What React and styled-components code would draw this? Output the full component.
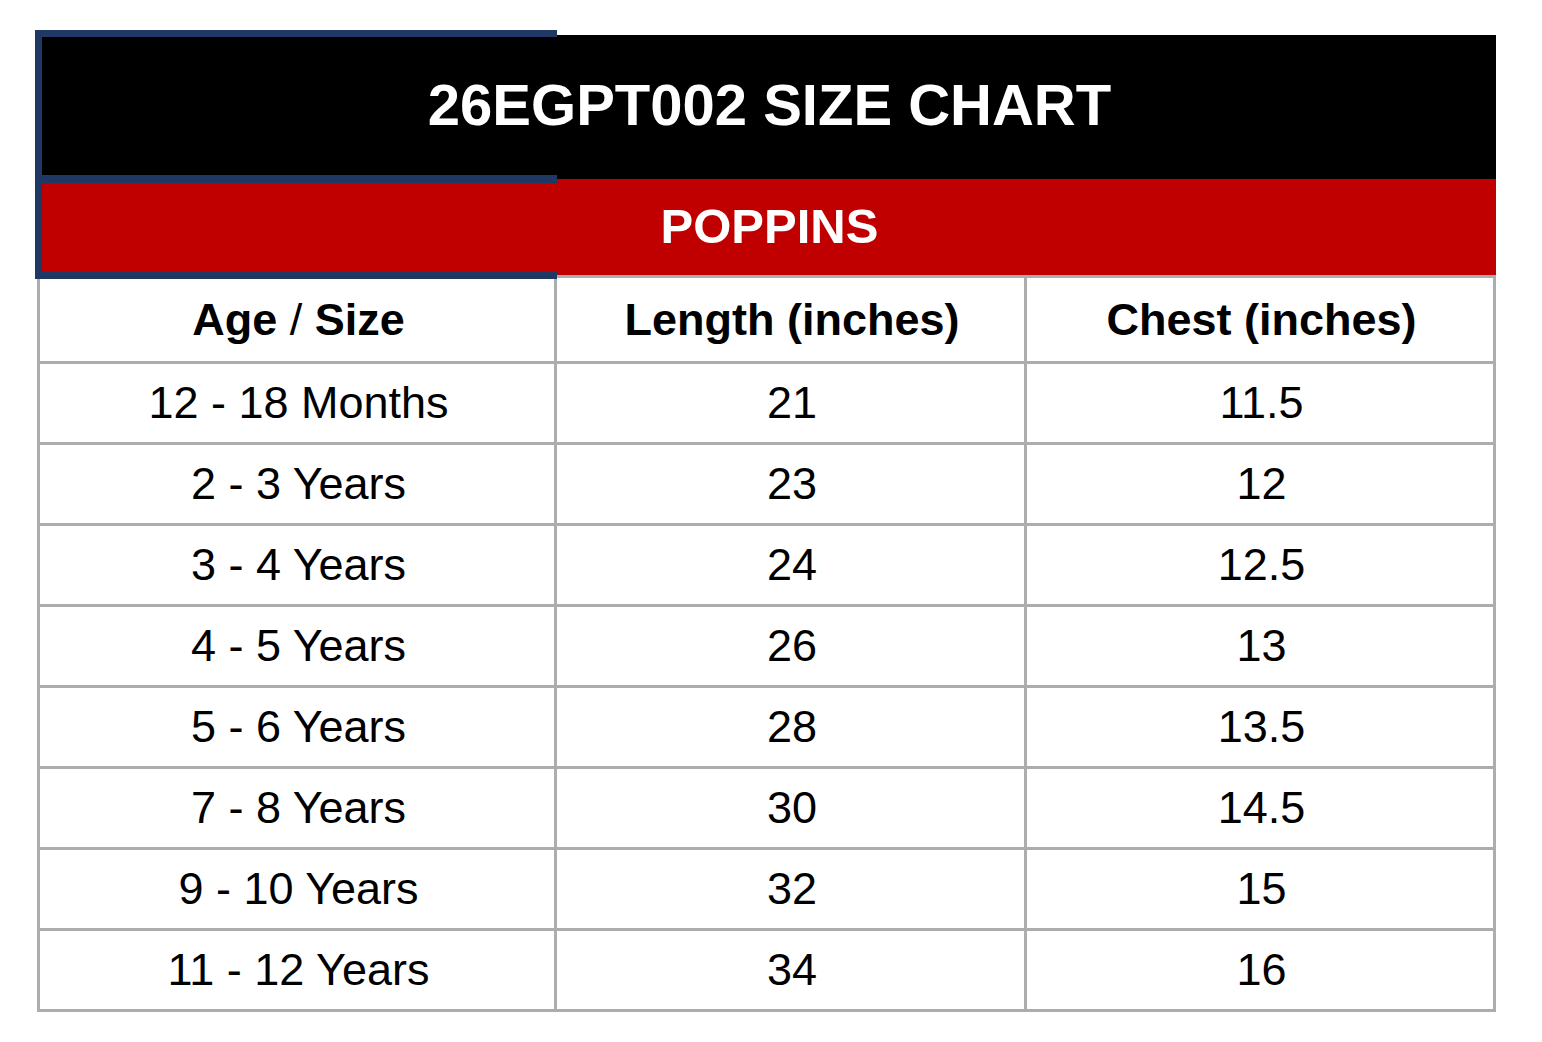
import React from 'react';
import styled, { createGlobalStyle } from 'styled-components';

const GlobalStyle = createGlobalStyle`
    body {
        margin: 0;
        background: #ffffff;
        font-family: "Liberation Sans", Arial, Helvetica, sans-serif;
    }
`

const rows = [
    ['12 - 18 Months', '21', '11.5'],
    ['2 - 3 Years', '23', '12'],
    ['3 - 4 Years', '24', '12.5'],
    ['4 - 5 Years', '26', '13'],
    ['5 - 6 Years', '28', '13.5'],
    ['7 - 8 Years', '30', '14.5'],
    ['9 - 10 Years', '32', '15'],
    ['11 - 12 Years', '34', '16'],
]

function App() {
    return (
        <>
        <GlobalStyle />
        <SPage>
            <SChart>
                <STitle>26EGPT002 SIZE CHART</STitle>
                <SBrand>POPPINS</SBrand>
                <SGrid>
                    <SCell head><span>Age <SSlash>/</SSlash> Size</span></SCell>
                    <SCell head>Length (inches)</SCell>
                    <SCell head>Chest (inches)</SCell>
                    {rows.map((row) => (
                        row.map((value, i) => (
                            <SCell key={row[0] + i}>{value}</SCell>
                        ))
                    ))}
                </SGrid>
                <SSelection>
                    <SSelectionBar />
                </SSelection>
            </SChart>
        </SPage>
        </>
    )
}

const SPage = styled.div`
    padding: 35px 0 0 37px;
`

const SChart = styled.div`
    position: relative;
    width: 1459px;
`

const STitle = styled.div`
    height: 144px;
    background-color: #000000;
    color: #ffffff;
    font-weight: bold;
    font-size: 58px;
    display: flex;
    align-items: center;
    justify-content: center;
    padding: 0 0 5px 6px;
    box-sizing: border-box;
`

const SBrand = styled.div`
    height: 96px;
    background-color: #c00000;
    color: #ffffff;
    font-weight: bold;
    font-size: 49px;
    display: flex;
    align-items: center;
    justify-content: center;
    padding: 0 0 3px 6px;
    box-sizing: border-box;
`

const SGrid = styled.div`
    display: grid;
    grid-template-columns: 514px 467px 466px;
    grid-template-rows: 83px repeat(8, 78px);
    gap: 3px;
    padding: 3px;
    background-color: #adadad;
`

const SCell = styled.div`
    background-color: #ffffff;
    color: #000000;
    font-size: 45px;
    font-weight: ${(props) => (props.head ? 'bold' : 'normal')};
    display: flex;
    align-items: center;
    justify-content: center;
    white-space: pre;
    padding-left: 3px;
`

const SSlash = styled.span`
    font-weight: normal;
`

const SSelection = styled.div`
    position: absolute;
    top: -5px;
    left: -2px;
    width: 522px;
    height: 249px;
    border: 7px solid #1f3864;
    border-right: none;
    box-sizing: border-box;
`

const SSelectionBar = styled.div`
    position: absolute;
    top: 138px;
    left: -7px;
    width: 522px;
    height: 8px;
    background-color: #1f3864;
`

export default App
